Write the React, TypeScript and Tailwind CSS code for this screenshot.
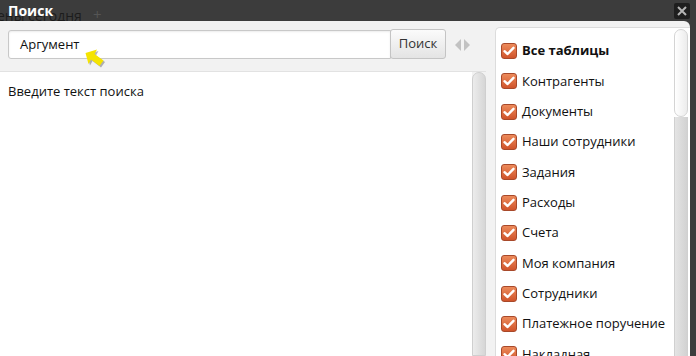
import React from "react";

const tables = [
  "Все таблицы",
  "Контрагенты",
  "Документы",
  "Наши сотрудники",
  "Задания",
  "Расходы",
  "Счета",
  "Моя компания",
  "Сотрудники",
  "Платежное поручение",
  "Накладная",
];

function Check() {
  return (
    <span className="flex h-[16px] w-[16px] shrink-0 items-center justify-center rounded-[3px] border border-[#a8492a] bg-gradient-to-b from-[#ec8a5a] to-[#d0542b]">
      <svg width="12" height="10" viewBox="0 0 12 10">
        <path d="M1.5 5.2 L4.6 8 L10.5 1.8" fill="none" stroke="#fff" strokeWidth="2.4" strokeLinecap="round" strokeLinejoin="round" />
      </svg>
    </span>
  );
}

export default function App() {
  return (
    <div
      className="relative flex h-[356px] w-[696px] flex-col overflow-hidden bg-[#3c3c3c] text-[13px] text-[#111]"
      style={{ fontFamily: '"Open Sans", "DejaVu Sans", sans-serif' }}
    >
      {/* tab text showing through behind the dialog title */}
      <span className="absolute left-[-3px] top-[5px] text-[14px] text-[#1c1c1c]">ены сегодня</span>
      <span className="absolute left-[93px] top-[3px] text-[15px] text-[#555]">+</span>

      <div className="relative flex h-[21px] shrink-0 items-center justify-between pl-[8px] pr-[6px]">
        <span className="text-[14px] font-bold leading-none text-white">Поиск</span>
        <button className="flex h-[16px] w-[16px] items-center justify-center rounded-[2px] bg-[#1e1e1e]">
          <svg width="10" height="10" viewBox="0 0 10 10">
            <path d="M1 1 L9 9 M9 1 L1 9" stroke="#b5b5b5" strokeWidth="2" />
          </svg>
        </button>
      </div>

      <div className="relative mr-[6px] flex min-h-0 flex-1 rounded-tr-[6px] bg-[#f2f2f2]">
        <div className="flex w-[486px] flex-col">
          <div className="flex h-[50px] shrink-0 items-start pl-[8px] pt-[9px]">
            <div className="flex h-[29px] w-[383px] items-center rounded-l-[3px] border border-[#c8c8c8] bg-white pl-[11px] shadow-[inset_0_1px_2px_rgba(0,0,0,0.08)]">
              Аргумент
            </div>
            <button className="-ml-px -mt-px flex h-[30px] w-[56px] items-center justify-center rounded-[3px] border border-[#c4c4c4] bg-gradient-to-b from-[#fbfbfb] to-[#e4e4e4] text-[#333]">
              Поиск
            </button>
            <svg className="ml-[8px] mt-[9px]" width="18" height="12" viewBox="0 0 18 12">
              <path d="M7 0 L7 12 L1 6 Z" fill="#c2c2c2" />
              <path d="M10 0 L10 12 L16 6 Z" fill="#c2c2c2" />
            </svg>
          </div>
          <div className="flex min-h-0 flex-1 border-t border-[#e2e2e2]">
            <div className="flex-1 bg-white pl-[8px] pt-[10px]">Введите текст поиска</div>
            <div className="w-[14px] rounded-t-[7px] border border-[#cfcfcf] bg-gradient-to-r from-[#ececec] to-[#d6d6d6]" />
          </div>
        </div>

        <div className="ml-[9px] mt-[6px] flex flex-1 overflow-hidden rounded-tl-[5px] border-l border-t border-[#dcdcdc] bg-white">
          <div className="flex flex-1 flex-col pl-[5px] pt-[8px]">
            {tables.map((t, i) => (
              <div key={t} className="flex h-[30.33px] shrink-0 items-center gap-[5px]">
                <Check />
                <span className={i === 0 ? "font-bold" : ""}>{t}</span>
              </div>
            ))}
          </div>
          <div className="mr-[2px] mt-[1px] flex w-[14px] flex-col">
            <div className="h-[88px] rounded-[7px] border border-[#d4d4d4] bg-gradient-to-r from-[#ffffff] to-[#ececec]" />
            <div className="flex-1 border-x border-[#d0d0d0] bg-gradient-to-r from-[#e4e4e4] to-[#d2d2d2]" />
          </div>
        </div>
      </div>

      {/* pointer highlight */}
      <svg className="absolute left-[84px] top-[48px]" width="22" height="22" viewBox="0 0 22 22">
        <path d="M1.5 5 L13 1.5 L10.5 6 L19.5 12.5 L15.5 18 L7 11.5 L4.5 16 Z" fill="#000" opacity="0.28" transform="translate(1.5 1.5)" />
        <path d="M1.5 5 L13 1.5 L10.5 6 L19.5 12.5 L15.5 18 L7 11.5 L4.5 16 Z" fill="#f5e400" />
      </svg>
    </div>
  );
}
